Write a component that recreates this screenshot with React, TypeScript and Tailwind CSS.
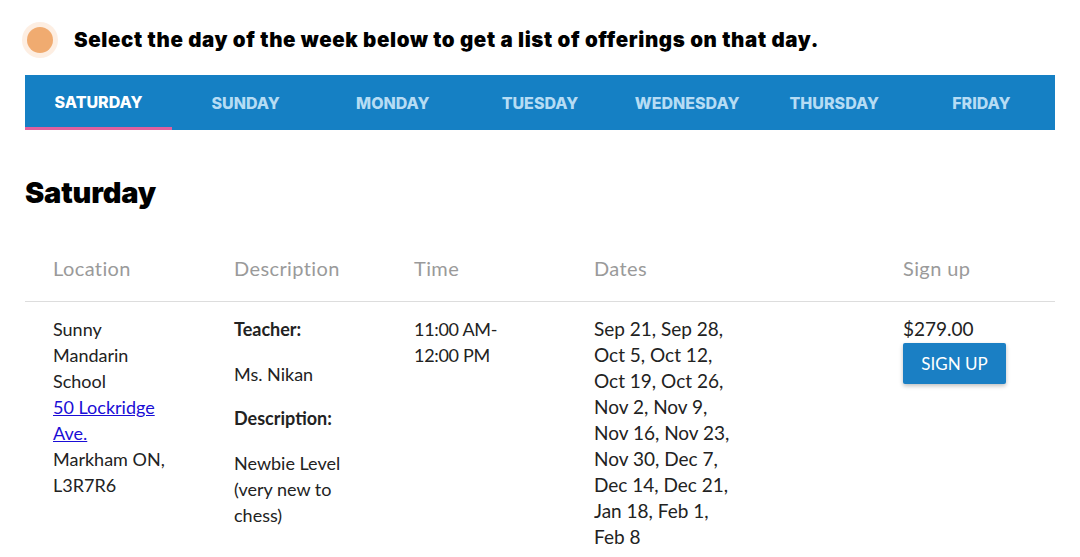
import React from "react";

const days = ["SATURDAY", "SUNDAY", "MONDAY", "TUESDAY", "WEDNESDAY", "THURSDAY", "FRIDAY"];

export default function App() {
  return (
    <div className="w-[1080px] h-[557px] overflow-hidden bg-white text-[#222] font-['Lato',sans-serif]">
      <div className="flex items-center h-[75px] pl-[22px] pt-[5px]">
        <div className="w-[36px] h-[36px] rounded-full bg-[#fdeee2] flex items-center justify-center">
          <div className="w-[26px] h-[26px] rounded-full bg-[#f0ab70]" />
        </div>
        <div className="ml-[16px] text-[20.5px] font-black text-black font-['Inter',sans-serif] tracking-[0.62px]">
          Select the day of the week below to get a list of offerings on that day.
        </div>
      </div>
      <div className="mx-[25px] h-[55px] bg-[#1580c4] grid grid-cols-7 font-['Inter',sans-serif]">
        {days.map((d, i) => (
          <div
            key={d}
            className={
              i === 0
                ? "flex items-center justify-center text-[16px] font-extrabold text-white border-b-[3px] border-[#e0609e] pt-[1px]"
                : "flex items-center justify-center text-[16px] font-extrabold text-[#b6dcf4]"
            }
          >
            {d}
          </div>
        ))}
      </div>
      <h1 className="mx-[25px] mt-[45px] text-[29px] font-black text-black leading-[36px] font-['Inter',sans-serif] tracking-[-0.2px]">Saturday</h1>
      <div className="mx-[25px] mt-[28px]">
        <div className="grid grid-cols-[181px_180px_180px_309px_181px] border-b border-[#dddddd] h-[63px] items-start pt-[14px] text-[20px] tracking-[0.4px] text-[#9a9a9a]">
          <div className="pl-[28px]">Location</div>
          <div className="pl-[28px]">Description</div>
          <div className="pl-[28px]">Time</div>
          <div className="pl-[28px]">Dates</div>
          <div className="pl-[28px]">Sign up</div>
        </div>
        <div className="grid grid-cols-[181px_180px_180px_309px_181px] pt-[14px] text-[18px] leading-[26px] text-[#222]">
          <div className="pl-[28px] pr-[33px]">
            Sunny Mandarin School
            <br />
            <a href="#" className="text-[#1a0dd6] underline">50 Lockridge Ave.</a>
            <br />
            Markham ON, L3R7R6
          </div>
          <div className="pl-[28px] pr-[20px]">
            <p className="font-bold">Teacher:</p>
            <p className="mt-[19px]">Ms. Nikan</p>
            <p className="mt-[18px] font-bold">Description:</p>
            <p className="mt-[19px]">Newbie Level (very new to chess)</p>
          </div>
          <div className="pl-[28px] pr-[20px] tracking-[-0.3px]">
            11:00 AM-
            <br />
            12:00 PM
          </div>
          <div className="pl-[28px] pr-[140px] text-[19px]">
            Sep 21, Sep 28, Oct 5, Oct 12, Oct 19, Oct 26, Nov 2, Nov 9, Nov 16, Nov 23, Nov 30, Dec 7, Dec 14, Dec 21, Jan 18, Feb 1, Feb 8
          </div>
          <div className="pl-[28px]">
            <div className="text-[19px]">$279.00</div>
            <button className="mt-[1px] w-[103px] h-[41px] bg-[#1a7fc4] text-white text-[17px] rounded-[2px] shadow-[0_2px_4px_rgba(0,0,0,0.25)]">
              SIGN UP
            </button>
          </div>
        </div>
      </div>
    </div>
  );
}
